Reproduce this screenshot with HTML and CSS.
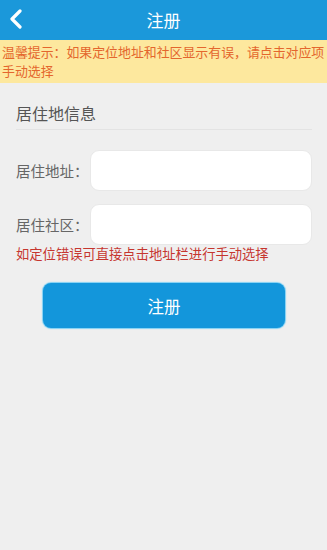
FILE: index.html
```html
<!DOCTYPE html>
<html lang="zh">
<head>
<meta charset="utf-8">
<link rel="stylesheet" href="styles.css">
</head>
<body>
<div class="page">
  <header class="topbar">
    <svg class="back" width="14" height="20" viewBox="0 0 14 20"><path d="M11 2 L3 10 L11 18" fill="none" stroke="#fff" stroke-width="3.2" stroke-linecap="round" stroke-linejoin="round"/></svg>
    <div class="title">注册</div>
  </header>
  <div class="notice">温馨提示：如果定位地址和社区显示有误，请点击对应项手动选择</div>
  <main class="content">
    <div class="section-title">居住地信息</div>
    <div class="row first">
      <span class="label">居住地址：</span>
      <div class="input"></div>
    </div>
    <div class="row">
      <span class="label">居住社区：</span>
      <div class="input"></div>
    </div>
    <div class="hint">如定位错误可直接点击地址栏进行手动选择</div>
    <div class="btn">注册</div>
  </main>
</div>
</body>
</html>
```
FILE: styles.css
```css
* { box-sizing: border-box; }
html, body { margin: 0; padding: 0; }
body {
  background: #efefef;
  font-family: "Noto Sans CJK SC", "Noto Sans", sans-serif;
  width: 327px;
  height: 550px;
  overflow: hidden;
}
.page { min-height: 550px; background: #efefef; }
.topbar {
  height: 40px;
  background: #1b98da;
  display: flex;
  align-items: center;
  justify-content: center;
  position: relative;
}
.back { position: absolute; left: 9px; top: 9px; }
.title { color: #fff; font-size: 17px; line-height: 40px; }
.notice {
  background: #fde89e;
  color: #e4662d;
  font-size: 12.9px;
  line-height: 19px;
  padding: 2px 0 3px 2px;
  height: 43px;
  letter-spacing: 0;
}
.content { padding: 0 15px 0 16px; }
.section-title {
  margin-top: 14px;
  height: 33px;
  line-height: 32px;
  font-size: 16px;
  color: #555;
  border-bottom: 1px solid #e3e3e3;
}
.row { display: flex; align-items: center; margin-top: 13px; }
.row.first { margin-top: 20px; }
.label { width: 74px; flex: none; font-size: 14.5px; color: #666; }
.input {
  flex: 1;
  height: 41px;
  background: #fff;
  border-radius: 9px;
  border: 1px solid #e8e8e8;
}
.hint {
  color: #c6362f;
  font-size: 13.3px;
  line-height: 17px;
  margin-top: 0;
}
.btn {
  margin: 21px 0 0 27px;
  width: 242px;
  height: 45px;
  background: #1396db;
  border-radius: 8px;
  color: #fff;
  font-size: 16.5px;
  display: flex;
  align-items: center;
  justify-content: center;
  box-shadow: 0 0 1px 1px #7fd0f4;
}
```
